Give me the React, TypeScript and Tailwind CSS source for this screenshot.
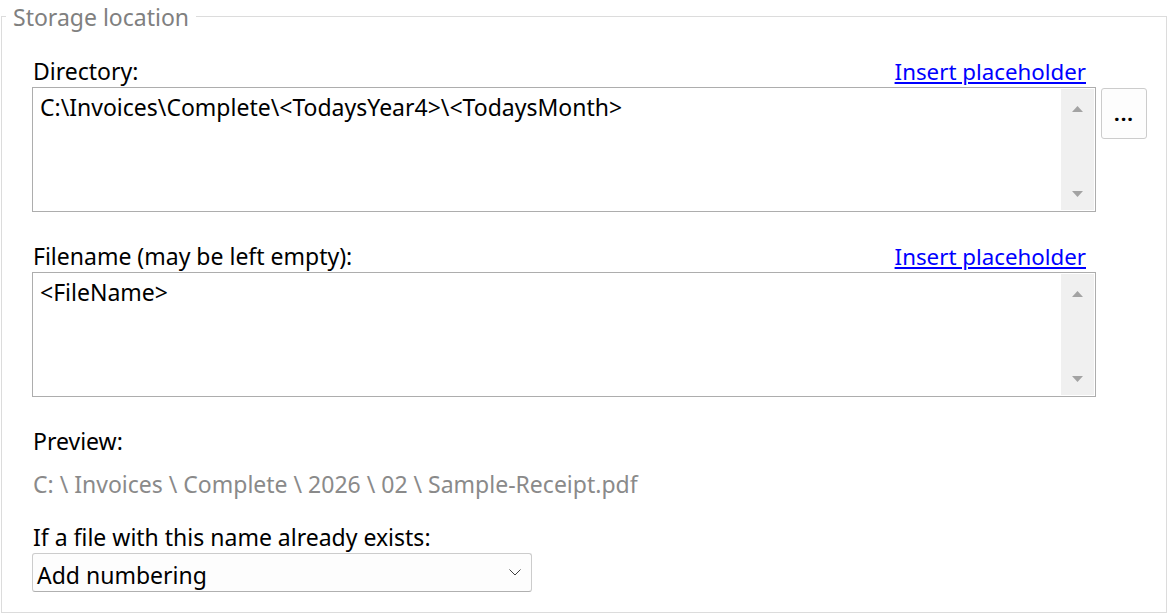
const Arrow = ({ down }: { down?: boolean }) => (
  <svg width="11" height="6" viewBox="0 0 11 6" className="block">
    {down ? <polygon points="0,0 11,0 5.5,6" fill="#a3a3a3" /> : <polygon points="0,6 11,6 5.5,0" fill="#a3a3a3" />}
  </svg>
);

const TextBox = ({ value }: { value: string }) => (
  <div className="w-[1064px] h-[125px] border border-[#adadad] bg-white flex">
    <div className="flex-1 pl-[7px] pt-[5px] leading-[28px] text-black">{value}</div>
    <div className="w-[33px] bg-[#f0f0f0] my-px mr-px flex flex-col items-center justify-between pt-[17px] pb-[13px]">
      <Arrow />
      <Arrow down />
    </div>
  </div>
);

const FieldLabel = ({ text }: { text: string }) => (
  <div className="w-[1064px] flex justify-between items-baseline leading-[32px] h-[32px] pl-px">
    <span className="text-black">{text}</span>
    <a href="#" className="text-[#0000ff] text-[22.3px] underline underline-offset-[2px] pr-[10px]">Insert placeholder</a>
  </div>
);

export default function App() {
  return (
    <div className="bg-white w-[1167px] h-[615px] overflow-hidden text-[23px]" style={{ fontFamily: '"Noto Sans", "Open Sans", sans-serif' }}>
      <div className="relative ml-px mt-4 w-[1166px] h-[597px] border border-[#dcdcdc] pl-[30px] pt-[38px]">
        {/* group title */}
        <div className="absolute -top-[14px] left-[4px] px-[7px] bg-white text-[#808080] leading-[28px]">Storage location</div>

        <FieldLabel text="Directory:" />
        <div className="flex gap-[5px] items-start">
          <TextBox value="C:\Invoices\Complete\<TodaysYear4>\<TodaysMonth>" />
          <button className="mt-px w-[46px] h-[51px] border border-[#cccccc] rounded-[3px] bg-[#fdfdfd] flex items-center justify-center text-[20px] font-bold text-black leading-none tracking-[1px]">
            ...
          </button>
        </div>

        <div className="mt-[28px]">
          <FieldLabel text="Filename (may be left empty):" />
        </div>
        <TextBox value="<FileName>" />

        <div className="mt-[28px] leading-[32px] pl-px text-black">Preview:</div>
        <div className="mt-[11px] leading-[32px] pl-px text-[#8a8a8a]">C: \ Invoices \ Complete \ 2026 \ 02 \ Sample-Receipt.pdf</div>

        <div className="mt-[22px] pt-[1px] pb-[2px] leading-[28px] pl-px text-black">If a file with this name already exists:</div>
        <div className="w-[500px] h-[39px] border border-[#cccccc] border-b-[#b0b0b0] rounded-[3px] bg-[#fdfdfd] flex items-center justify-between pl-[4px] pr-[10px]">
          <span className="leading-[28px] pt-[4px] text-black">Add numbering</span>
          <svg width="12" height="7" viewBox="0 0 12 7" className="block">
            <polyline points="0.5,0.5 6,6 11.5,0.5" fill="none" stroke="#404040" strokeWidth="1" />
          </svg>
        </div>
      </div>
    </div>
  );
}
